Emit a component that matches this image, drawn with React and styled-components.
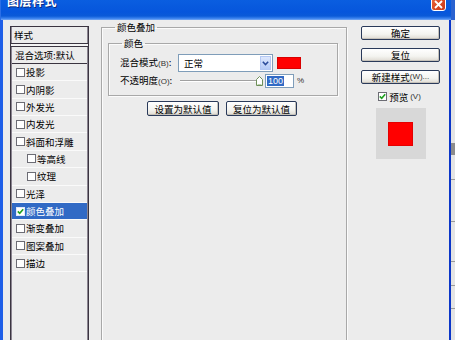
import React from "react";
import styled, { createGlobalStyle } from "styled-components";

const GlobalStyle = createGlobalStyle`
  html, body { margin: 0; padding: 0; background: #ececec; }
  body { font-family: "Noto Sans CJK SC", "Liberation Sans", sans-serif; }
  * { box-sizing: border-box; }
`;

const CJK = `"Noto Sans CJK SC", "Liberation Sans", sans-serif`;

const Screen = styled.div`
  width: 455px;
  height: 340px;
  overflow: hidden;
  display: flex;
`;

const Dialog = styled.div`
  width: 451px;
  height: 340px;
  display: flex;
  flex-direction: column;
`;

const TitleBar = styled.div`
  height: 20px;
  flex: none;
  display: flex;
  align-items: flex-start;
  padding: 0 5px 0 6px;
  background: linear-gradient(to bottom, #0a5ee0 0%, #0656dc 60%, #0a5ad8 80%, #3a82ee 92%, #7aaaf2 100%);
  border-left: 1px solid #2a6ee6;
`;

const TitleText = styled.span`
  margin-top: -6px;
  font: bold 12px/14px ${CJK};
  color: #fff;
  text-shadow: 1px 1px 0 #0a2a80;
  letter-spacing: 0.5px;
`;

const CloseButton = styled.div`
  margin-left: auto;
  margin-top: -10px;
  width: 15px;
  height: 21px;
  border: 1px solid #fff;
  border-radius: 3px;
  background: linear-gradient(135deg, #f08a6a 0%, #e0542c 45%, #c8381a 100%);
  display: flex;
  align-items: flex-end;
  justify-content: center;
  padding-bottom: 1px;
`;

const Body = styled.div`
  flex: 1;
  display: flex;
  align-items: flex-start;
  padding: 0 9px 0 7px;
  background: #ececec;
  border-left: 3px solid #1f5fe8;
  border-right: 2px solid #0b36c8;
`;

/* ---------- Left style list ---------- */

const StyleList = styled.div`
  width: 79px;
  height: 330px;
  flex: none;
  margin-top: 6px;
  border: 1px solid #3a3440;
  box-shadow: inset 1px 0 0 #8a8490, inset -1px 0 0 #8a8490;
  background: #ececec;
  display: flex;
  flex-direction: column;
`;

const ListHeader = styled.div`
  height: 17px;
  padding-left: 3px;
  display: flex;
  align-items: center;
  font: 9.5px/12px ${CJK};
  color: #000;
  border-bottom: 1px solid #3a3440;
`;

const HeaderGap = styled.div`
  height: 3px;
  background: #f4f4f4;
  border-bottom: 1px solid #3a3440;
`;

const ListRow = styled.div`
  height: ${(p) => (p.$tall ? "17px" : "17.36px")};
  flex: none;
  display: flex;
  align-items: center;
  gap: 1px;
  padding-left: ${(p) => (p.$indent ? "15px" : p.$plain ? "3px" : "4px")};
  font: 9.5px/12px ${CJK};
  color: ${(p) => (p.$selected ? "#fff" : "#000")};
  background: ${(p) => (p.$selected ? "#316ac5" : "transparent")};
  border-bottom: 1px solid ${(p) => (p.$dark ? "#3a3440" : "#fafafa")};
  margin: 0 1px;
`;

const Box = styled.span`
  width: 9px;
  height: 9px;
  flex: none;
  border: 1px solid ${(p) => (p.$onBlue ? "#dfe8f8" : "#6c6c74")};
  background: #fff;
  display: inline-flex;
  align-items: center;
  justify-content: center;
`;

const Check = ({ checked, onBlue }) => (
  <Box $onBlue={onBlue}>
    {checked && (
      <svg width="7" height="7" viewBox="0 0 7 7">
        <path d="M0.8 3.4 L2.7 5.3 L6.2 1.2" fill="none" stroke="#21a121" strokeWidth="1.6" />
      </svg>
    )}
  </Box>
);

/* ---------- Middle group boxes ---------- */

const Group = styled.fieldset`
  margin: ${(p) => p.$margin};
  padding: ${(p) => p.$padding};
  width: ${(p) => p.$width};
  min-height: ${(p) => p.$minHeight || "0"};
  flex: none;
  border: 1px solid #a8a8a8;
  box-shadow: 1px 1px 0 #fbfbfb, inset 1px 1px 0 #fbfbfb;
  display: flex;
  flex-direction: column;
  align-items: stretch;
`;

const Legend = styled.legend`
  margin-left: ${(p) => p.$offset};
  padding: 0 2px;
  font: 9.5px/12px ${CJK};
  color: #000;
`;

const FieldRow = styled.div`
  display: flex;
  align-items: center;
  height: ${(p) => p.$h};
  margin-top: ${(p) => p.$mt};
  padding-left: 5px;
`;

const FieldLabel = styled.span`
  width: 58px;
  flex: none;
  font: 9.5px/12px ${CJK};
  color: #000;
  white-space: nowrap;
`;

const Mnemonic = styled.span`
  font: 8px/12px "Liberation Sans", sans-serif;
  color: #333;
`;

const Select = styled.div`
  width: 95px;
  height: 18px;
  border: 1px solid #7f9db9;
  background: #fff;
  display: flex;
  align-items: stretch;
  padding: 1px;
`;

const SelectValue = styled.span`
  flex: 1;
  padding-left: 4px;
  font: 9.5px/14px ${CJK};
  color: #000;
`;

const SelectArrow = styled.span`
  width: 11px;
  background: linear-gradient(to bottom, #dde7fc, #b6cbf6);
  border: 1px solid #b4c8f4;
  display: flex;
  align-items: center;
  justify-content: center;
`;

const Swatch = styled.div`
  width: 24px;
  height: 12px;
  margin-left: 4px;
  background: #ff0000;
  border: 1px solid #d80000;
`;

const Slider = styled.div`
  width: 85px;
  height: 14px;
  display: flex;
  align-items: center;
  padding-left: 2px;
`;

const Track = styled.div`
  width: 76px;
  height: 2px;
  border-top: 1px solid #a0a0a0;
  border-bottom: 1px solid #fff;
`;

const NumberInput = styled.div`
  width: 29px;
  height: 14px;
  margin-left: 2px;
  border: 1px solid #7f9db9;
  background: #fff;
  display: flex;
  align-items: center;
  padding-left: 1px;
`;

const Selected = styled.span`
  background: #316ac5;
  color: #fff;
  font: 9px/10px "Liberation Sans", sans-serif;
  padding: 0 1px;
`;

const Percent = styled.span`
  margin-left: 3px;
  font: 8px/12px "Liberation Sans", sans-serif;
  color: #333;
`;

const ButtonRow = styled.div`
  display: flex;
  justify-content: center;
  gap: 7px;
  margin-top: 5px;
  padding-right: 2px;
`;

const Button = styled.div`
  width: ${(p) => p.$w || "79px"};
  height: ${(p) => p.$h || "14px"};
  border: 1px solid #2a3a5a;
  border-radius: 2px;
  background: linear-gradient(to bottom, #ffffff 0%, #f4f4f0 60%, #dedad2 100%);
  box-shadow: inset -1px -1px 0 #c6c2ba;
  display: flex;
  align-items: center;
  justify-content: center;
  font: 9.5px/12px ${CJK};
  color: #000;
  white-space: nowrap;
`;

/* ---------- Right column ---------- */

const SideColumn = styled.div`
  width: 79px;
  flex: none;
  margin-top: 6px;
  margin-left: 14px;
  display: flex;
  flex-direction: column;
  align-items: center;
  gap: 8px;
`;

const PreviewToggle = styled.label`
  display: flex;
  align-items: center;
  gap: 2px;
  height: 9px;
  margin-left: -2px;
  font: 9.5px/12px ${CJK};
  color: #000;
`;

const PreviewBox = styled.div`
  width: 50px;
  height: 51px;
  margin-top: -1px;
  background: #d8d8d8;
  display: flex;
  align-items: center;
  justify-content: center;
`;

const PreviewSquare = styled.div`
  width: 25px;
  height: 24px;
  background: #ff0000;
  border: 1px solid #e40000;
`;

/* ---------- Background window strip at right ---------- */

const Outside = styled.div`
  width: 4px;
  flex: none;
  display: flex;
  flex-direction: column;
  background: #dcdcdc;
`;

const OutsideBand = styled.div`
  height: ${(p) => p.$h};
  flex: none;
  background: ${(p) => p.$bg};
  border-bottom: ${(p) => (p.$line ? "1px solid #9a9a9a" : "none")};
`;

const items = [
  { label: "投影" },
  { label: "内阴影" },
  { label: "外发光" },
  { label: "内发光" },
  { label: "斜面和浮雕" },
  { label: "等高线", indent: true },
  { label: "纹理", indent: true },
  { label: "光泽" },
  { label: "颜色叠加", checked: true, selected: true },
  { label: "渐变叠加" },
  { label: "图案叠加" },
  { label: "描边" },
];

export default function App() {
  return (
    <>
      <GlobalStyle />
      <Screen>
        <Dialog>
          <TitleBar>
            <TitleText>图层样式</TitleText>
            <CloseButton>
              <svg width="9" height="9" viewBox="0 0 9 9">
                <path d="M1 1 L8 8 M8 1 L1 8" stroke="#fff" strokeWidth="1.8" />
              </svg>
            </CloseButton>
          </TitleBar>
          <Body>
            <StyleList>
              <ListHeader>样式</ListHeader>
              <HeaderGap />
              <ListRow $tall $plain $dark>混合选项:默认</ListRow>
              {items.map((it) => (
                <ListRow key={it.label} $indent={it.indent} $selected={it.selected}>
                  <Check checked={it.checked} onBlue={it.selected} />
                  {it.label}
                </ListRow>
              ))}
            </StyleList>

            <Group $margin="1px 0 0 12px" $padding="0 8px 0 6px" $width="246px" $minHeight="330px">
              <Legend $offset="7px">颜色叠加</Legend>
              <Group $margin="4px 0 0 0" $padding="0 6px 7px 6px" $width="230px">
                <Legend $offset="7px">颜色</Legend>
                <FieldRow $h="18px" $mt="5px">
                  <FieldLabel>
                    混合模式<Mnemonic>(B)</Mnemonic>:
                  </FieldLabel>
                  <Select>
                    <SelectValue>正常</SelectValue>
                    <SelectArrow>
                      <svg width="7" height="5" viewBox="0 0 7 5">
                        <path d="M0.8 0.8 L3.5 3.6 L6.2 0.8" fill="none" stroke="#2a4a9a" strokeWidth="1.5" />
                      </svg>
                    </SelectArrow>
                  </Select>
                  <Swatch />
                </FieldRow>
                <FieldRow $h="14px" $mt="2px">
                  <FieldLabel>
                    不透明度<Mnemonic>(O)</Mnemonic>:
                  </FieldLabel>
                  <Slider>
                    <Track />
                    <svg width="7" height="10" viewBox="0 0 7 10">
                      <path d="M0.5 9.5 L0.5 3.5 L3.5 0.5 L6.5 3.5 L6.5 9.5 Z" fill="#fff" stroke="#6f8f5a" />
                      <path d="M1.5 8.5 L5.5 8.5" stroke="#b8d0a8" />
                    </svg>
                  </Slider>
                  <NumberInput>
                    <Selected>100</Selected>
                  </NumberInput>
                  <Percent>%</Percent>
                </FieldRow>
              </Group>
              <ButtonRow>
                <Button $w="72px" $h="15px">设置为默认值</Button>
                <Button $w="71px" $h="15px">复位为默认值</Button>
              </ButtonRow>
            </Group>

            <SideColumn>
              <Button>确定</Button>
              <Button>复位</Button>
              <Button>
                新建样式<Mnemonic>(W)...</Mnemonic>
              </Button>
              <PreviewToggle>
                <Check checked />
                预览<Mnemonic>(V)</Mnemonic>
              </PreviewToggle>
              <PreviewBox>
                <PreviewSquare />
              </PreviewBox>
            </SideColumn>
          </Body>
        </Dialog>
        <Outside>
          <OutsideBand $h="20px" $bg="#2a62d0" />
          <OutsideBand $h="123px" $bg="#e4e4e4" />
          <OutsideBand $h="12px" $bg="#8c8c8c" />
          <OutsideBand $h="25px" $bg="#e4e4e4" $line />
          <OutsideBand $h="42px" $bg="#e4e4e4" $line />
          <OutsideBand $h="40px" $bg="#e4e4e4" $line />
          <OutsideBand $h="24px" $bg="#e4e4e4" $line />
          <OutsideBand $h="23px" $bg="#e4e4e4" $line />
          <OutsideBand $h="40px" $bg="#e4e4e4" />
        </Outside>
      </Screen>
    </>
  );
}
